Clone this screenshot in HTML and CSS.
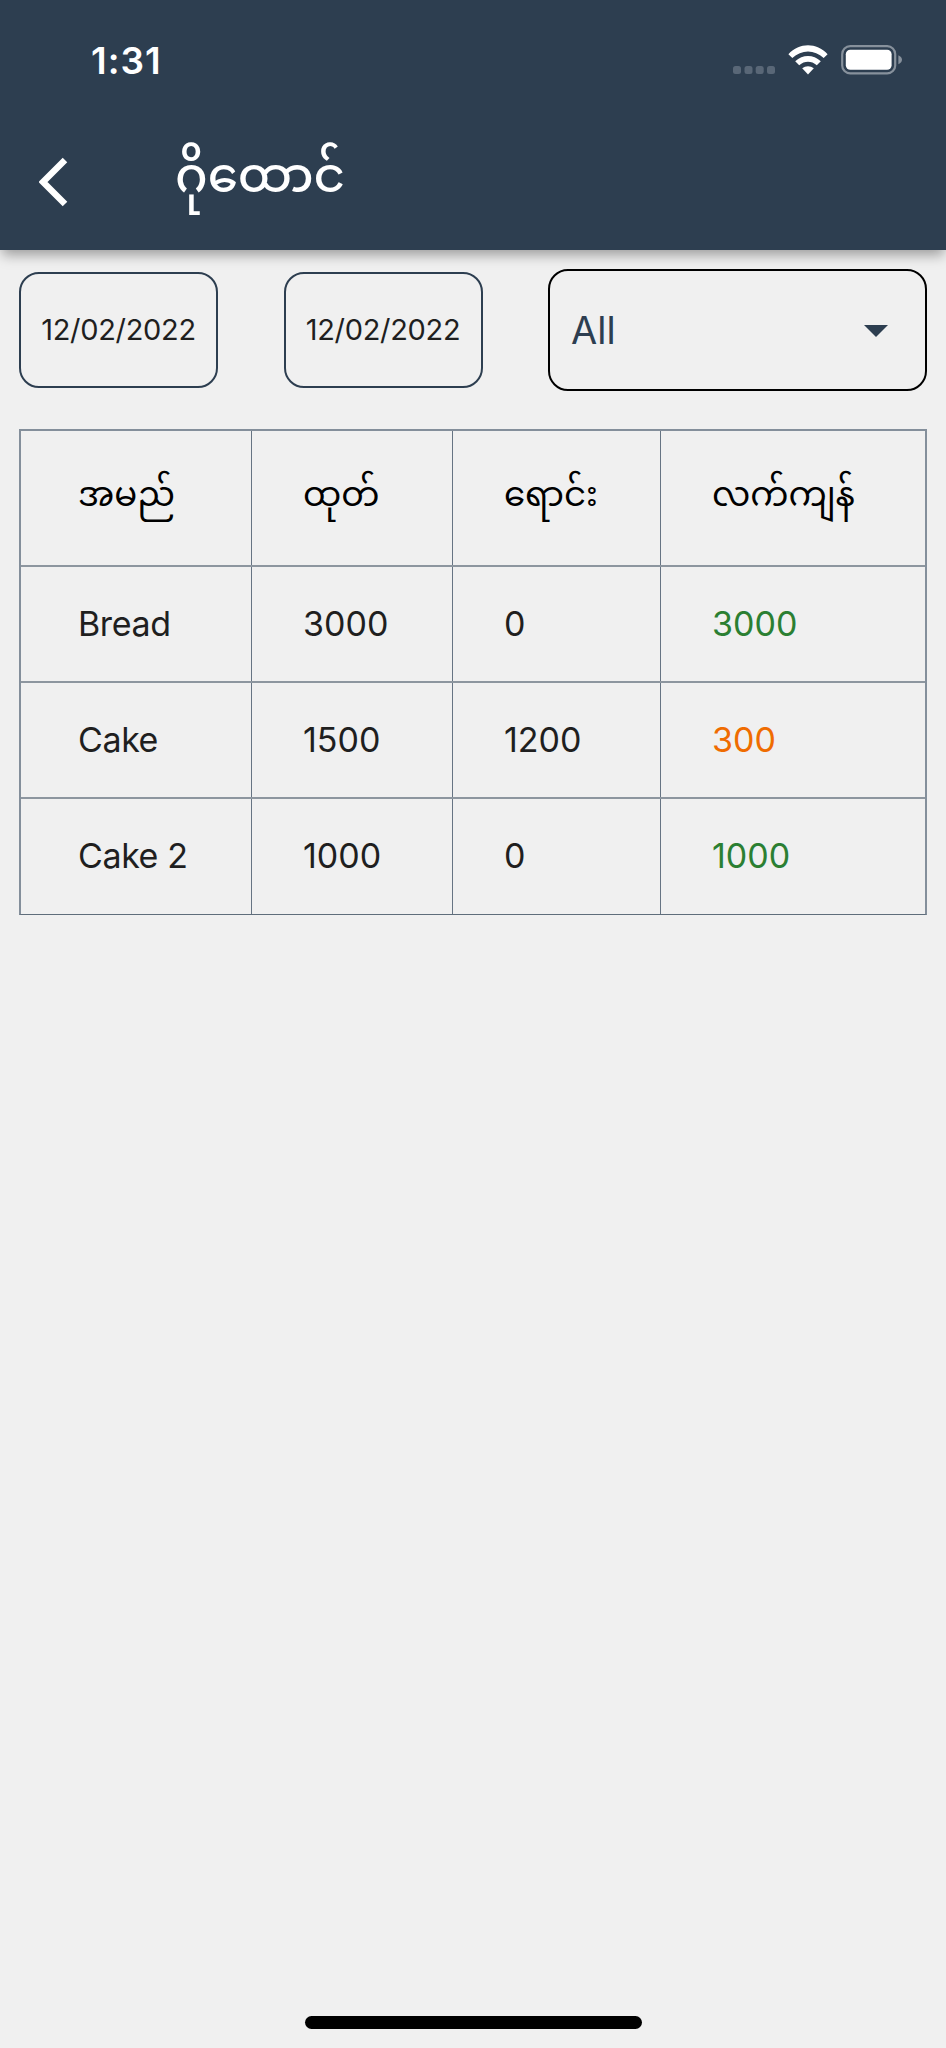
FILE: index.html
```
<!DOCTYPE html>
<html lang="my">
<head>
<meta charset="utf-8">
<title>ဂိုထောင်</title>
<link rel="stylesheet" href="styles.css">
</head>
<body>
<div class="screen">
  <header class="header">
    <div class="status">
      <span class="time">1:31</span>
      <div class="indicators">
        <svg class="dots" width="42" height="9" viewBox="0 0 42 9"><g fill="#596777"><rect width="8" height="8" rx="2.5"/><rect x="11.5" width="8" height="8" rx="2.5"/><rect x="22.7" width="8" height="8" rx="2.5"/><rect x="34" width="8" height="8" rx="2.5"/></g></svg>
        <svg class="wifi" width="40" height="30" viewBox="0 0 40 30" fill="#fff"><path d="M.4 9.2C11.5-2.7 28.5-2.7 39.6 9.2L35.7 13.1C26.5 4.2 13.5 4.2 4.3 13.1Z"/><path d="M7.2 16.2C14.8 9.2 25.2 9.2 32.8 16.2L28.8 20.3C23.3 15.7 16.7 15.7 11.2 20.3Z"/><path d="M14.2 23.3C17.6 20.5 22.4 20.5 25.8 23.3L20 29.6Z"/></svg>
        <svg class="battery" width="62" height="30" viewBox="0 0 62 30"><rect x="1.2" y="1.2" width="53" height="27.2" rx="8" fill="none" stroke="#87919c" stroke-width="2.2"/><rect x="4.8" y="4.8" width="45.8" height="20" rx="4.5" fill="#fff"/><path d="M57.4 10.3Q61 12 61 14.8T57.4 19.3Z" fill="#87919c"/></svg>
      </div>
    </div>
    <div class="bar">
      <svg class="back" width="30" height="50" viewBox="0 0 30 50"><path d="M26 3L4 25L26 47" fill="none" stroke="#fff" stroke-width="6.4"/></svg>
      <h1 class="title">ဂိုထောင်</h1>
    </div>
  </header>
  <main class="content">
    <div class="filters">
      <div class="date">12/02/2022</div>
      <div class="date">12/02/2022</div>
      <div class="select"><span>All</span><svg class="caret" width="24" height="12" viewBox="0 0 24 12"><path d="M0 0H24L12 12Z" fill="#2d3e50"/></svg></div>
    </div>
    <div class="table">
      <div class="row head"><span>အမည်</span><span>ထုတ်</span><span>ရောင်း</span><span>လက်ကျန်</span></div>
      <div class="row"><span>Bread</span><span>3000</span><span>0</span><span class="good">3000</span></div>
      <div class="row"><span>Cake</span><span>1500</span><span>1200</span><span class="low">300</span></div>
      <div class="row"><span>Cake 2</span><span>1000</span><span>0</span><span class="good">1000</span></div>
    </div>
  </main>
  <div class="home"></div>
</div>
</body>
</html>
```
FILE: styles.css
```
* { box-sizing: border-box; }
body { margin: 0; background: #f0f0f0; font-family: Inter, "Noto Sans Myanmar", "Noto Sans", sans-serif; color: #1f1f1f; }
.screen { height: 2048px; display: flex; flex-direction: column; overflow: hidden; }
.header { height: 250px; background: #2d3e50; color: #fff; box-shadow: 0 7px 12px -2px rgba(0,0,0,.35); }
.status { height: 120px; padding: 0 43px 0 91px; display: flex; justify-content: space-between; align-items: center; }
.time { font-size: 37px; font-weight: 600; letter-spacing: 1px; }
.indicators { display: flex; align-items: center; }
.dots { margin-top: 20px; }
.wifi { margin-left: 13px; }
.battery { margin-left: 13px; }
.bar { display: flex; align-items: center; height: 124px; padding-left: 39px; }
.back { flex: none; }
.title { margin: 0 0 14px 106px; font-size: 48.500px; font-weight: 500; line-height: 80px; white-space: nowrap; }
.content { padding: 19px 19px 0; flex: 1; }
.filters { display: flex; align-items: center; height: 122px; }
.date { width: 199px; height: 116px; margin-right: 65.500px; padding-bottom: 2px; border: 2px solid #2d3e50; border-radius: 20px; display: flex; align-items: center; justify-content: center; font-size: 29px; letter-spacing: -.3px; white-space: nowrap; }
.select { flex: 1; height: 122px; border: 2px solid #000; border-radius: 20px; padding: 0 37px 0 21px; display: flex; align-items: center; justify-content: space-between; font-size: 38px; color: #2d3e50; }
.caret { margin-top: 2px; }
.table { margin-top: 38px; width: 908px; border: 2px solid #848f9b; border-bottom: 1px solid #5f6d7b; }
.row { display: grid; grid-template-columns: 230px 201px 208px 1fr; height: 116.200px; font-size: 34px; border-top: 2px solid #8d969f; }
.row > span { display: flex; align-items: center; padding: 0 0 2px 51px; border-left: 1px solid #667483; white-space: nowrap; }
.row > span:first-child { padding-left: 57px; border-left: 0; letter-spacing: -.4px; }
.row.head { height: 134px; border-top: 0; color: #000; }
.row.head > span, .row.head > span:first-child { letter-spacing: 0; padding-bottom: 0; }
.row > .good { color: #2b7f32; }
.row > .low { color: #ef6c00; }
.home { width: 337px; height: 13px; border-radius: 7px; background: #000; margin: 0 auto 19px; }
```
